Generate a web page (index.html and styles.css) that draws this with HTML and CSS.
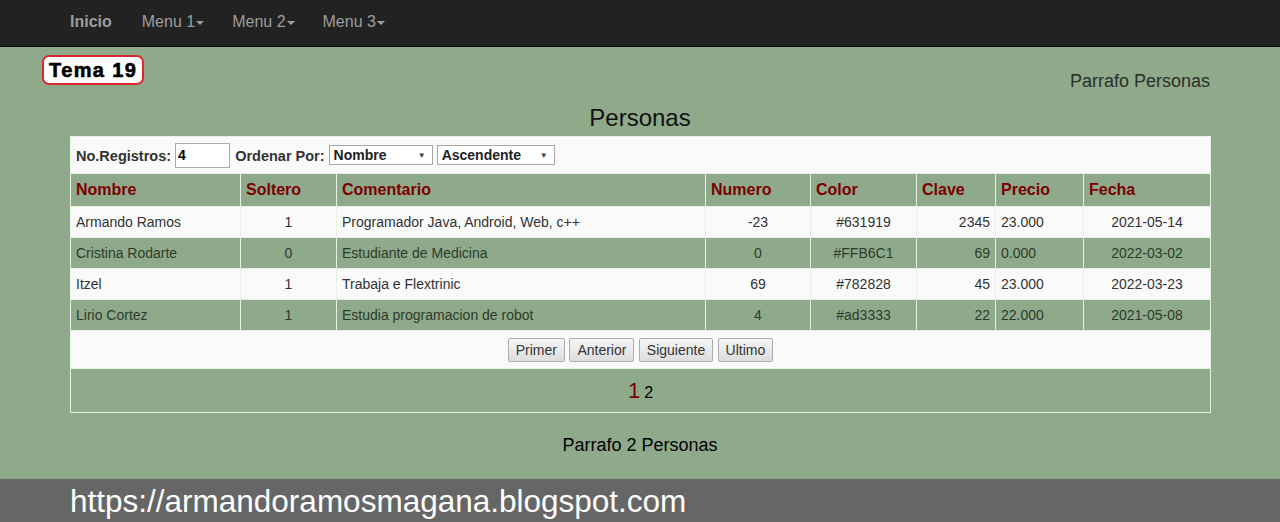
FILE: index.html
```html
<!DOCTYPE html>
<html lang="es">
<head>
<meta charset="utf-8">
<title>Personas</title>
<link rel="stylesheet" href="styles.css">
</head>
<body>
<nav class="navbar">
  <div class="container nav-inner">
    <a class="brand">Inicio</a>
    <a class="nav-link">Menu 1<span class="caret"></span></a>
    <a class="nav-link">Menu 2<span class="caret"></span></a>
    <a class="nav-link">Menu 3<span class="caret"></span></a>
  </div>
</nav>
<main class="page">
  <div class="top-row">
    <div class="tema">Tema 19</div>
    <p class="parrafo">Parrafo Personas</p>
  </div>
  <h2 class="title">Personas</h2>
  <div class="container">
    <table class="grid">
      <colgroup>
        <col class="c1"><col class="c2"><col class="c3"><col class="c4">
        <col class="c5"><col class="c6"><col class="c7"><col class="c8">
      </colgroup>
      <thead>
        <tr class="tools">
          <td colspan="8">
            <label>No.Registros:</label>
            <input class="inp" type="text" value="4">
            <label class="lbl2">Ordenar Por:</label>
            <span class="sel sel1">Nombre<span class="arrow">▼</span></span>
            <span class="sel sel2">Ascendente<span class="arrow">▼</span></span>
          </td>
        </tr>
        <tr class="head">
          <th>Nombre</th>
          <th>Soltero</th>
          <th>Comentario</th>
          <th>Numero</th>
          <th>Color</th>
          <th>Clave</th>
          <th>Precio</th>
          <th>Fecha</th>
        </tr>
      </thead>
      <tbody>
        <tr class="odd">
          <td>Armando Ramos</td><td class="ctr">1</td><td>Programador Java, Android, Web, c++</td><td class="ctr">-23</td><td class="ctr">#631919</td><td class="rt">2345</td><td>23.000</td><td class="ctr">2021-05-14</td>
        </tr>
        <tr class="even">
          <td>Cristina Rodarte</td><td class="ctr">0</td><td>Estudiante de Medicina</td><td class="ctr">0</td><td class="ctr">#FFB6C1</td><td class="rt">69</td><td>0.000</td><td class="ctr">2022-03-02</td>
        </tr>
        <tr class="odd">
          <td>Itzel</td><td class="ctr">1</td><td>Trabaja e Flextrinic</td><td class="ctr">69</td><td class="ctr">#782828</td><td class="rt">45</td><td>23.000</td><td class="ctr">2022-03-23</td>
        </tr>
        <tr class="even">
          <td>Lirio Cortez</td><td class="ctr">1</td><td>Estudia programacion de robot</td><td class="ctr">4</td><td class="ctr">#ad3333</td><td class="rt">22</td><td>22.000</td><td class="ctr">2021-05-08</td>
        </tr>
      </tbody>
      <tfoot>
        <tr class="btns">
          <td colspan="8">
            <button class="btn">Primer</button>
            <button class="btn">Anterior</button>
            <button class="btn">Siguiente</button>
            <button class="btn">Ultimo</button>
          </td>
        </tr>
        <tr class="pages">
          <td colspan="8"><span class="pg-cur">1</span> <span class="pg">2</span></td>
        </tr>
      </tfoot>
    </table>
  </div>
  <p class="parrafo2">Parrafo 2 Personas</p>
</main>
<footer class="footer">
  <div class="container">https://armandoramosmagana.blogspot.com</div>
</footer>
</body>
</html>
```
FILE: styles.css
```css
* { box-sizing: border-box; }
html, body { margin: 0; padding: 0; }
body {
  background: #8faa8b;
  font-family: "Liberation Sans", Arial, sans-serif;
  font-size: 14px;
  color: #333;
  height: 522px;
  overflow: hidden;
}
.container { width: 1140px; margin: 0 auto; }

.navbar {
  height: 47px;
  background: #222;
  border-bottom: 1px solid #080808;
}
.nav-inner { display: flex; align-items: center; height: 46px; }
.brand {
  color: #9d9d9d;
  font-size: 16px;
  font-weight: bold;
  margin-right: 30px;
  position: relative;
  top: -1px;
}
.nav-link {
  color: #9d9d9d;
  font-size: 16px;
  margin-right: 28px;
  position: relative;
  top: -1px;
}
.caret {
  display: inline-block;
  width: 0; height: 0;
  margin-left: 1px;
  vertical-align: middle;
  border-top: 4px solid #9d9d9d;
  border-left: 4px solid transparent;
  border-right: 4px solid transparent;
}

.top-row {
  display: flex;
  justify-content: space-between;
  align-items: flex-start;
  padding: 8px 70px 0 42px;
  height: 54px;
}
.tema {
  background: #fff;
  border: 2px solid #d9282e;
  border-radius: 7px;
  padding: 0 5px 0 5px;
  font-weight: bold;
  font-size: 20px;
  color: #000;
  letter-spacing: 1.4px;
  -webkit-text-stroke: 0.6px #000;
  height: 30px;
  line-height: 26px;
}
.parrafo {
  margin: 16px 0 0;
  font-size: 18px;
  color: #2b2f2a;
}
.title {
  text-align: center;
  font-weight: normal;
  font-size: 24px;
  color: #111;
  margin: 4px 0 5px;
  line-height: 26px;
}

.grid {
  width: 1140px;
  border-collapse: collapse;
  border: 1px solid #e6f0e3;
  table-layout: fixed;
}
.grid td, .grid th {
  border: 1px solid #e6f0e3;
}
.c1 { width: 170px; }
.c2 { width: 96px; }
.c3 { width: 369px; }
.c4 { width: 105px; }
.c5 { width: 106px; }
.c6 { width: 79px; }
.c7 { width: 88px; }
.c8 { width: 127px; }

.tools td {
  background: #fafafa;
  height: 37px;
  padding: 0 5px;
  font-weight: bold;
  font-size: 14.5px;
  color: #333;
  white-space: nowrap;
}
.tools label { vertical-align: middle; }
.inp {
  width: 55px;
  height: 25px;
  border: 1px solid #aaa;
  font-family: inherit;
  font-weight: bold;
  font-size: 14px;
  padding: 1px 2px;
  vertical-align: middle;
  margin-right: 1px;
}
.sel {
  display: inline-flex;
  justify-content: space-between;
  align-items: center;
  height: 20px;
  border: 1px solid #a6a6a6;
  background: #fff;
  padding: 0 4px;
  font-size: 14px;
  vertical-align: middle;
  color: #222;
}
.sel1 { width: 104px; }
.sel2 { width: 118px; }
.arrow { font-size: 8px; color: #444; padding-right: 2px; }

.head th {
  background: #8faa8b;
  color: #7a0000;
  font-size: 16px;
  text-align: left;
  padding: 0 5px;
  height: 33px;
}

tbody td {
  height: 31px;
  padding: 0 5px;
  font-size: 14px;
  color: #333;
  white-space: nowrap;
  overflow: hidden;
}
tbody tr.odd td { background: #fafafa; }
tbody tr.even td { background: #8faa8b; color: #2c3a2a; }
.ctr { text-align: center; }
.rt { text-align: right; }

.btns td {
  background: #fafafa;
  height: 38px;
  text-align: center;
  padding: 0;
}
.btn {
  font-family: "Liberation Sans", Arial, sans-serif;
  font-size: 14px;
  color: #333;
  height: 24px;
  padding: 0 7px;
  border: 1px solid #adadad;
  border-radius: 2px;
  background: linear-gradient(#f6f6f6, #dddddd);
  margin: 0 0.25px;
}
.pages td {
  height: 44px;
  text-align: center;
  background: #8faa8b;
  padding-top: 2px;
}
.pg-cur { color: #7a0000; font-size: 22px; }
.pg { color: #000; font-size: 16px; }

.parrafo2 {
  text-align: center;
  font-size: 18px;
  color: #000;
  margin: 22px 0 0;
  height: 44px;
}
.footer {
  background: #666;
  height: 44px;
  color: #fff;
  font-size: 31.5px;
  line-height: 44px;
}
```
